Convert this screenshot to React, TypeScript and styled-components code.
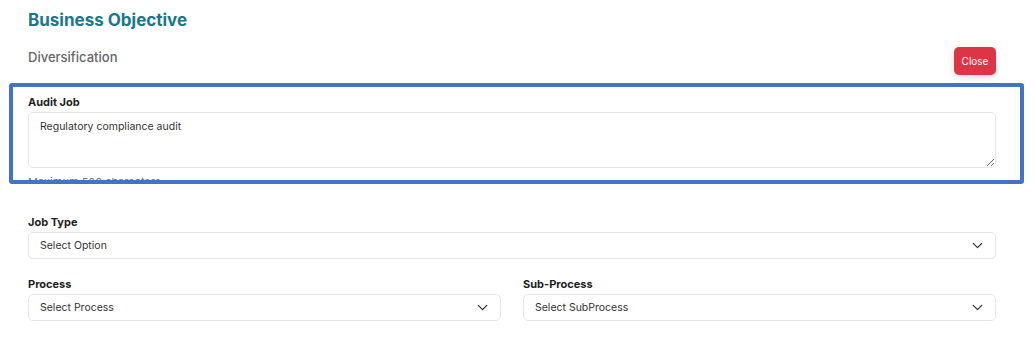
import { createGlobalStyle, styled } from "styled-components";
import { ChevronDown } from "lucide-react";

const GlobalStyle = createGlobalStyle`
  * { box-sizing: border-box; }
  body {
    margin: 0;
    background: #ffffff;
    font-family: Inter, "Noto Sans", Arial, sans-serif;
    color: #222;
  }
`;

interface SelectProps {
  label: string;
  placeholder: string;
}

const SelectField = ({ label, placeholder }: SelectProps) => (
  <Field>
    <Label>{label}</Label>
    <SelectBox>
      <span>{placeholder}</span>
      <ChevronDown size={17} strokeWidth={1.8} color="#333" />
    </SelectBox>
  </Field>
);

export default function App() {
  return (
    <>
      <GlobalStyle />
      <Page>
        <Header>
          <TitleBlock>
            <Title>Business Objective</Title>
            <Subtitle>Diversification</Subtitle>
          </TitleBlock>
          <CloseButton type="button">Close</CloseButton>
        </Header>

        <HighlightFrame>
          <Label>Audit Job</Label>
          <TextArea defaultValue="Regulatory compliance audit" />
          <Hint>Maximum 500 characters</Hint>
        </HighlightFrame>

        <Section>
          <SelectField label="Job Type" placeholder="Select Option" />
        </Section>

        <Row>
          <SelectField label="Process" placeholder="Select Process" />
          <SelectField label="Sub-Process" placeholder="Select SubProcess" />
        </Row>
      </Page>
    </>
  );
}

const Page = styled.div`
  padding: 8px 38px 0 28px;
`;
const Header = styled.div`
  display: flex;
  justify-content: space-between;
  align-items: flex-end;
`;
const TitleBlock = styled.div`
  display: flex;
  flex-direction: column;
  padding-bottom: 8px;
`;
const Title = styled.h1`
  margin: 0;
  font-size: 17px;
  line-height: 24px;
  font-weight: 700;
  color: #17798a;
`;
const Subtitle = styled.p`
  margin: 15px 0 0;
  font-size: 13px;
  line-height: 20px;
  font-weight: 500;
  color: #666;
`;
const CloseButton = styled.button`
  width: 42px;
  height: 28px;
  padding: 0;
  border: none;
  border-radius: 5px;
  background: #dc3545;
  color: #fff;
  font-family: inherit;
  font-size: 10px;
  box-shadow: 0 2px 6px rgba(0, 0, 0, 0.15);
`;
const HighlightFrame = styled.div`
  margin: 8px -28px 0 -19px;
  height: 101px;
  border: 4px solid #4472c4;
  border-radius: 3px;
  overflow: hidden;
  padding: 7px 24px 0 15px;
`;
const Field = styled.div`
  display: flex;
  flex-direction: column;
  flex: 1;
  min-width: 0;
`;
const Label = styled.div`
  font-size: 11px;
  line-height: 16px;
  font-weight: 700;
  color: #1e1e1e;
  margin-bottom: 2px;
`;
const TextArea = styled.textarea`
  display: block;
  width: 100%;
  height: 56px;
  border: 1px solid #e6e6e6;
  border-radius: 5px;
  padding: 6px 11px;
  font-family: inherit;
  font-size: 10.5px;
  line-height: 16px;
  color: #333;
  outline: none;
`;
const Hint = styled.div`
  margin-top: 6px;
  font-size: 11px;
  line-height: 16px;
  color: #777;
`;
const Section = styled.div`
  margin-top: 30px;
  display: flex;
`;
const Row = styled.div`
  margin-top: 17px;
  display: flex;
  gap: 22px;
`;
const SelectBox = styled.div`
  height: 27px;
  display: flex;
  align-items: center;
  justify-content: space-between;
  padding: 0 9px 0 11px;
  border: 1px solid #e6e6e6;
  border-radius: 5px;
  font-size: 10.5px;
  color: #333;
`;
